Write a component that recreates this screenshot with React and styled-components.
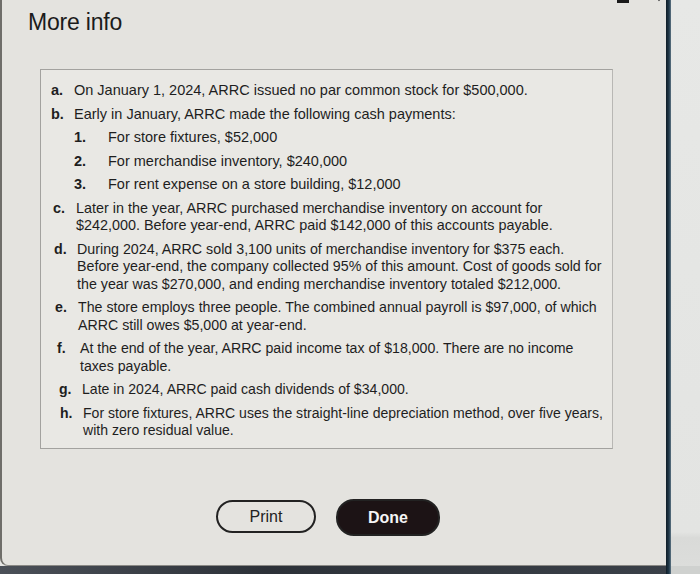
import React from "react"
import styled, { createGlobalStyle } from "styled-components"

const Global = createGlobalStyle`
  html, body { margin: 0; padding: 0; }
  body {
    width: 700px;
    height: 574px;
    overflow: hidden;
    background: #e6e6e4;
    font-family: "Liberation Sans", Arial, Helvetica, sans-serif;
  }
`

const Screen = styled.div`
  display: grid;
  grid-template-columns: 666px 5px 1fr;
  grid-template-rows: 566px 8px;
  width: 700px;
  height: 574px;
`

const Panel = styled.div`
  grid-column: 1;
  grid-row: 1;
  position: relative;
  background: #e4e3df;
  border-left: 2px solid #6f6e6a;
  border-bottom: 1px solid #8a8985;
  border-bottom-left-radius: 8px;
  display: flex;
  flex-direction: column;
  min-width: 0;
`

const Edge = styled.div`
  grid-column: 2;
  grid-row: 1 / 3;
  background: linear-gradient(90deg, #0f1c26, #20394a 60%, #5f7585);
`

const Side = styled.div`
  grid-column: 3;
  grid-row: 1;
  background: linear-gradient(180deg, #e7e8e6 0%, #e3e4e2 94%, #d9dad8 95%, #dcdddb 100%);
`

const Floor = styled.div`
  grid-column: 1;
  grid-row: 2;
  background: linear-gradient(90deg, #4b5058, #2c3138 40%, #3a4048);
`

const FloorRight = styled.div`
  grid-column: 3;
  grid-row: 2;
  background: #cfd1cf;
`

const Title = styled.h1`
  margin: 9px 0 0 26px;
  font-size: 23px;
  font-weight: 400;
  color: #1b1b1b;
  letter-spacing: -0.2px;
  line-height: 26px;
`

const Controls = styled.div`
  position: absolute;
  top: -6px;
  right: 0;
  display: flex;
  align-items: flex-start;
  gap: 22px;
`

const InfoBox = styled.div`
  margin: 34px 0 0 38px;
  width: 573px;
  height: 380px;
  box-sizing: border-box;
  border: 1px solid #a3a29f;
  border-right-color: #b8b7b4;
  background: #e9e8e4;
  padding: 12px 0 0 10px;
  display: flex;
  flex-direction: column;
  gap: 6px;
`

const Item = styled.div`
  display: flex;
  font-size: ${p => p.size || 14.5}px;
  line-height: 17.5px;
  color: #1e1e1e;
  padding-left: ${p => p.shift || 0}px;
`

const Marker = styled.span`
  flex: 0 0 ${p => p.w || 23}px;
  font-weight: 700;
`

const Text = styled.span`
  flex: 1;
  white-space: pre;
`

const Sub = styled(Item)`
  padding-left: ${p => 23 + (p.shift || 0)}px;
`

const Footer = styled.div`
  display: flex;
  justify-content: center;
  gap: 20px;
  margin: 50px 0 0 -12px;
`

const Button = styled.button`
  font-family: inherit;
  font-size: 16px;
  height: ${p => (p.dark ? 37 : 33)}px;
  width: ${p => (p.dark ? 104 : 100)}px;
  border-radius: 18px;
  border: 2px solid #222;
  background: ${p => (p.dark ? "#1c1315" : "transparent")};
  color: ${p => (p.dark ? "#f5f5f5" : "#222")};
  font-weight: ${p => (p.dark ? 700 : 400)};
  margin-top: ${p => (p.dark ? 0 : 1)}px;
  padding: 0;
`

const items = [
  { m: "a.", t: "On January 1, 2024, ARRC issued no par common stock for $500,000." },
  { m: "b.", t: "Early in January, ARRC made the following cash payments:" },
  { sub: true, m: "1.", t: "For store fixtures, $52,000" },
  { sub: true, m: "2.", t: "For merchandise inventory, $240,000" },
  { sub: true, m: "3.", t: "For rent expense on a store building, $12,000" },
  { m: "c.", s: 2, z: 14.4, t: "Later in the year, ARRC purchased merchandise inventory on account for\n$242,000. Before year-end, ARRC paid $142,000 of this accounts payable." },
  { m: "d.", s: 3, z: 14.25, t: "During 2024, ARRC sold 3,100 units of merchandise inventory for $375 each.\nBefore year-end, the company collected 95% of this amount. Cost of goods sold for\nthe year was $270,000, and ending merchandise inventory totaled $212,000." },
  { m: "e.", s: 4, z: 14.2, t: "The store employs three people. The combined annual payroll is $97,000, of which\nARRC still owes $5,000 at year-end." },
  { m: "f.", s: 6, z: 14.15, t: "At the end of the year, ARRC paid income tax of $18,000. There are no income\ntaxes payable." },
  { m: "g.", s: 8, z: 14.1, t: "Late in 2024, ARRC paid cash dividends of $34,000." },
  { m: "h.", s: 9, z: 14.05, t: "For store fixtures, ARRC uses the straight-line depreciation method, over five years,\nwith zero residual value." },
]

export default function App() {
  return (
    <>
      <Global />
      <Screen>
        <Panel>
          <Controls>
            <svg width="14" height="10" viewBox="0 0 14 10">
              <rect x="1" y="5" width="12" height="4" fill="#1a1a1a" />
            </svg>
            <svg width="14" height="12" viewBox="0 0 14 12">
              <path d="M2 0 L7 6 L12 0" stroke="#333" strokeWidth="1.6" fill="none" />
            </svg>
          </Controls>
          <Title>More info</Title>
          <InfoBox>
            {items.map((it, i) =>
              it.sub ? (
                <Sub key={i} shift={it.s}>
                  <Marker w={34}>{it.m}</Marker>
                  <Text>{it.t}</Text>
                </Sub>
              ) : (
                <Item key={i} shift={it.s} size={it.z}>
                  <Marker>{it.m}</Marker>
                  <Text>{it.t}</Text>
                </Item>
              )
            )}
          </InfoBox>
          <Footer>
            <Button>Print</Button>
            <Button dark>Done</Button>
          </Footer>
        </Panel>
        <Edge />
        <Side />
        <Floor />
        <FloorRight />
      </Screen>
    </>
  )
}
